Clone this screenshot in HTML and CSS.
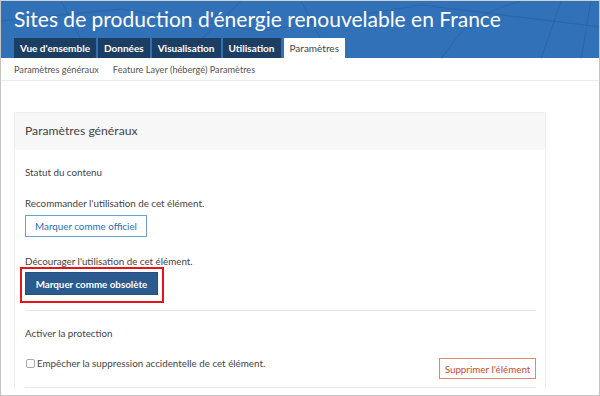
FILE: index.html
```html
<!doctype html>
<html lang="fr">
<head>
    <meta charset="UTF-8">
    <title>Paramètres</title>
    <link rel="stylesheet" href="styles.css">
</head>
<body>
    <div class="frame">
        <header class="banner">
            <svg class="map-lines" width="600" height="58" viewBox="0 0 600 58" aria-hidden="true">
                <path d="M0 20 L120 8 L260 30 L420 4 L600 26" />
                <path d="M60 0 L90 58" />
                <path d="M300 0 L330 58" />
                <path d="M440 58 C460 30 470 14 520 0" />
                <path d="M540 58 L560 0" />
                <path d="M580 58 L590 0" />
                <path d="M180 58 L240 0" />
            </svg>
            <h1>Sites de production d'énergie renouvelable en France</h1>
            <nav class="tabs">
                <a class="tab">Vue d'ensemble</a>
                <a class="tab">Données</a>
                <a class="tab">Visualisation</a>
                <a class="tab">Utilisation</a>
                <a class="tab active">Paramètres</a>
            </nav>
        </header>
        <div class="subnav">
            <a>Paramètres généraux</a>
            <a>Feature Layer (hébergé) Paramètres</a>
        </div>
        <div class="content">
            <section class="panel">
                <div class="panel-header">Paramètres généraux</div>
                <div class="panel-body">
                    <div class="group">
                        <p class="group-title">Statut du contenu</p>
                        <p class="label">Recommander l'utilisation de cet élément.</p>
                        <button class="btn btn-outline">Marquer comme officiel</button>
                        <p class="label label-second">Décourager l'utilisation de cet élément.</p>
                        <div class="highlight">
                            <button class="btn btn-primary">Marquer comme obsolète</button>
                        </div>
                    </div>
                    <div class="group">
                        <p class="group-title">Activer la protection</p>
                        <div class="protect-row">
                            <label class="check"><input type="checkbox"> Empêcher la suppression accidentelle de cet élément.</label>
                            <button class="btn btn-danger">Supprimer l'élément</button>
                        </div>
                    </div>
                </div>
            </section>
        </div>
    </div>
</body>
</html>
```

FILE: styles.css
```css
:root {
    --blue: #3171b8;
    --tab-dark: #1d3e63;
    --text-color: #444;
    --border-color: #e6e6e6;
}

* {
    box-sizing: border-box;
}

body {
    margin: 0;
    font-family: 'Lato', 'Liberation Sans', sans-serif;
    color: var(--text-color);
    background: #fff;
}

.frame {
    width: 600px;
    height: 396px;
    border: 1px solid #c4c4c4;
    border-top-color: #d0d0d0;
    overflow: hidden;
    display: flex;
    flex-direction: column;
}

.banner {
    position: relative;
    height: 57px;
    background-color: var(--blue);
    padding-left: 13px;
    display: flex;
    flex-direction: column;
    justify-content: space-between;
    flex-shrink: 0;
}

.map-lines {
    position: absolute;
    left: 0;
    top: 0;
    fill: none;
    stroke: rgba(20, 50, 90, 0.18);
    stroke-width: 1;
}

h1 {
    position: relative;
    margin: 0;
    padding-top: 5px;
    color: #fff;
    font-size: 21px;
    font-weight: 400;
    line-height: 26px;
}

.tabs {
    position: relative;
    display: flex;
    gap: 2px;
}

.tab {
    background: var(--tab-dark);
    color: #fff;
    font-size: 10px;
    font-weight: 700;
    height: 20px;
    line-height: 20px;
    padding: 0 6px;
    white-space: nowrap;
}

.tab.active {
    background: #fff;
    color: var(--text-color);
    font-weight: 400;
    margin-left: 1px;
    padding: 0 6px;
}

.subnav {
    display: flex;
    gap: 14px;
    height: 23px;
    align-items: center;
    padding-left: 13px;
    font-size: 9.2px;
    color: #555;
    border-bottom: 1px solid #ececec;
    flex-shrink: 0;
}

.content {
    padding: 31px 53px 0 13px;
}

.panel {
    border: 1px solid #efefef;
    border-bottom: none;
}

.panel-header {
    background: #f7f7f7;
    height: 37px;
    line-height: 36px;
    padding-left: 10px;
    font-size: 12.2px;
}

.panel-body {
    padding: 0 9px 0 10px;
}

.group {
    border-bottom: 1px solid var(--border-color);
}

.group-title {
    margin: 0;
    padding-top: 15px;
    font-size: 9.8px;
    line-height: 14px;
}

.label {
    margin: 17px 0 5px;
    font-size: 9.8px;
    line-height: 14px;
}

.label-second {
    margin-top: 17px;
    margin-bottom: 0;
}

.btn {
    font-family: inherit;
    font-size: 9.8px;
    cursor: pointer;
    border-radius: 0;
    height: 22px;
    padding: 0;
    white-space: nowrap;
}

.btn-outline {
    display: block;
    background: #fff;
    border: 1px solid #6f9ed3;
    color: #2d6db5;
    width: 122px;
}

.highlight {
    display: inline-block;
    border: 2px solid #e8141b;
    padding: 3px 4px 6px 3px;
    margin: -1px 0 7px -5px;
    vertical-align: top;
}

.btn-primary {
    display: block;
    background: #2a5a8e;
    border: 1px solid #24507e;
    color: #fff;
    font-weight: 700;
    width: 133px;
    height: 23px;
}

.protect-row {
    display: flex;
    justify-content: space-between;
    align-items: flex-start;
    padding: 16px 0 8px;
}

.check {
    display: flex;
    align-items: center;
    gap: 2px;
    font-size: 9.8px;
    line-height: 14px;
}

.check input {
    appearance: none;
    margin: 0 0 0 1px;
    width: 9px;
    height: 9px;
    border: 1px solid #a8a8a8;
    border-radius: 2px;
    background: #fff;
}

.btn-danger {
    background: #fff;
    border: 1px solid #e0876f;
    color: #cf4a30;
    width: 97px;
    height: 21px;
    margin-top: 2px;
}
```
